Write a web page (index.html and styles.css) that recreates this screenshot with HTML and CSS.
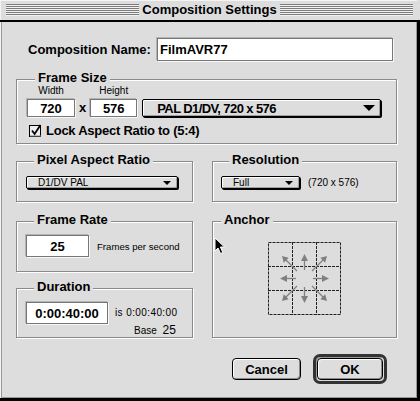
FILE: index.html
```html
<!DOCTYPE html>
<html>
<head>
<meta charset="utf-8">
<link rel="stylesheet" href="styles.css">
</head>
<body>
<div class="window">
  <div class="titlebar">
    <span class="stripes"></span>
    <span class="title">Composition Settings</span>
    <span class="stripes"></span>
  </div>
  <div class="content">
    <div class="name-row">
      <span class="name-label">Composition Name:</span>
      <div class="field name-field">FilmAVR77</div>
    </div>

    <div class="group frame-size">
      <div class="group-title">Frame Size</div>
      <div class="fs-row">
        <div class="col">
          <span class="small-label">Width</span>
          <div class="field fs-w">720</div>
        </div>
        <span class="times">x</span>
        <div class="col">
          <span class="small-label">Height</span>
          <div class="field fs-h">576</div>
        </div>
        <div class="popup big-popup">
          <span>PAL D1/DV, 720 x 576</span>
          <svg class="tri-big" width="12" height="6" viewBox="0 0 12 6"><polygon points="0,0 12,0 6,6" fill="#000"/></svg>
        </div>
      </div>
      <div class="check-row">
        <svg class="checkbox" width="14" height="13" viewBox="0 0 14 13">
          <rect x="0.5" y="1.5" width="11" height="11" fill="#eeeeee" stroke="#000"/>
          <line x1="1" y1="12" x2="12" y2="12" stroke="#888"/>
          <path d="M3 6.5 L5.6 10 L11.5 1" fill="none" stroke="#000" stroke-width="1.8"/>
        </svg>
        <span class="check-label">Lock Aspect Ratio to (5:4)</span>
      </div>
    </div>

    <div class="cols">
      <div class="col-left">
        <div class="group par">
          <div class="group-title">Pixel Aspect Ratio</div>
          <div class="popup small-popup par-popup">
            <span>D1/DV PAL</span>
            <svg width="8" height="4" viewBox="0 0 8 4"><polygon points="0,0 8,0 4,4" fill="#000"/></svg>
          </div>
        </div>
        <div class="group framerate">
          <div class="group-title">Frame Rate</div>
          <div class="fr-row">
            <div class="field fr-field">25</div>
            <span class="small-text fr-text">Frames per second</span>
          </div>
        </div>
        <div class="group duration">
          <div class="group-title">Duration</div>
          <div class="dur-row">
            <div class="field dur-field">0:00:40:00</div>
            <div class="dur-info">
              <div class="small-text dur-line1">is 0:00:40:00</div>
              <div class="small-text dur-line2">Base <span class="base-num">25</span></div>
            </div>
          </div>
        </div>
      </div>
      <div class="col-right">
        <div class="group resolution">
          <div class="group-title">Resolution</div>
          <div class="res-row">
            <div class="popup small-popup res-popup">
              <span>Full</span>
              <svg width="8" height="4" viewBox="0 0 8 4"><polygon points="0,0 8,0 4,4" fill="#000"/></svg>
            </div>
            <span class="small-text res-text">(720 x 576)</span>
          </div>
        </div>
        <div class="group anchor">
          <div class="group-title">Anchor</div>
          <svg class="anchor-grid" width="73" height="73" viewBox="0 0 73 73">
            <g stroke="#222" stroke-width="1" stroke-dasharray="3 1" fill="none">
              <rect x="0.5" y="0.5" width="72" height="72"/>
              <line x1="24.5" y1="0" x2="24.5" y2="73"/>
              <line x1="48.5" y1="0" x2="48.5" y2="73"/>
              <line x1="0" y1="24.5" x2="73" y2="24.5"/>
              <line x1="0" y1="48.5" x2="73" y2="48.5"/>
            </g>
            <g stroke="#808080" stroke-width="1.3" fill="none">
              <line x1="36.5" y1="28" x2="36.5" y2="17"/>
              <line x1="36.5" y1="45" x2="36.5" y2="56"/>
              <line x1="28" y1="36.5" x2="17" y2="36.5"/>
              <line x1="45" y1="36.5" x2="56" y2="36.5"/>
              <line x1="29" y1="29" x2="17" y2="17"/>
              <line x1="44" y1="29" x2="56" y2="17"/>
              <line x1="29" y1="44" x2="17" y2="56"/>
              <line x1="44" y1="44" x2="56" y2="56"/>
            </g>
            <g fill="#808080">
              <polygon points="36.5,12 33,19 40,19"/>
              <polygon points="36.5,61 33,54 40,54"/>
              <polygon points="12,36.5 19,33 19,40"/>
              <polygon points="61,36.5 54,33 54,40"/>
              <polygon points="14,14 20.7,15.8 15.8,20.7"/>
              <polygon points="59,14 57.2,20.7 52.3,15.8"/>
              <polygon points="14,59 15.8,52.3 20.7,57.2"/>
              <polygon points="59,59 57.2,52.3 52.3,57.2"/>
            </g>
          </svg>
        </div>
      </div>
    </div>

    <div class="buttons">
      <div class="button cancel">Cancel</div>
      <div class="ok-ring"><div class="button ok">OK</div></div>
    </div>
  </div>
  <svg class="cursor" width="12" height="18" viewBox="0 0 12 18">
    <path d="M1 1 L1 14 L4 11 L6.5 16.5 L8.8 15.5 L6.4 10 L10.5 10 Z" fill="#000" stroke="#fff" stroke-width="1" stroke-linejoin="miter"/>
  </svg>
</div>
</body>
</html>
```
FILE: styles.css
```css
* { box-sizing: border-box; }

body {
  margin: 0;
  background: #dddddd;
  font-family: "Liberation Sans", Arial, sans-serif;
  color: #000;
}

.window {
  width: 420px;
  height: 401px;
  position: relative;
}

.titlebar {
  width: 417px;
  height: 20px;
  display: flex;
  align-items: center;
  padding: 0 4px 0 6px;
  background: #dddddd;
  box-shadow: inset 1px 1px 0 #f4f4f4;
}

.stripes {
  flex: 1;
  height: 12px;
  background: repeating-linear-gradient(to bottom, #7b7b7b 0 1px, #f2f2f2 1px 2px);
}

.title {
  font-weight: bold;
  font-size: 13px;
  line-height: 20px;
  padding: 0 3px;
  white-space: nowrap;
}

.content {
  width: 420px;
  height: 381px;
  border-top: 2px solid #000;
  border-right: 3px solid #000;
  border-bottom: 3px solid #000;
  padding: 16px 0 0 16px;
  background: #dddddd;
  box-shadow: inset 1px 0 0 #f2f2f2, inset 2px 0 0 #999999, inset -1px -1px 0 #999999;
}

.name-row {
  display: flex;
  align-items: center;
  height: 23px;
  padding-left: 12px;
}

.name-label {
  width: 129px;
  font-weight: bold;
  font-size: 13px;
  line-height: 15px;
  white-space: nowrap;
}

.field {
  background: #fff;
  border: 1px solid #767676;
  box-shadow: -1px -1px 0 #b4b4b4, 1px 1px 0 #f8f8f8;
  font-weight: bold;
  font-size: 13px;
  display: flex;
  align-items: center;
  justify-content: center;
  white-space: nowrap;
}

.name-field {
  width: 236px;
  height: 23px;
  justify-content: flex-start;
  padding-left: 2px;
}

.group {
  border: 1px solid #8a8a8a;
  box-shadow: 1px 1px 0 #fff, inset 1px 1px 0 #fff;
}

.group-title {
  width: fit-content;
  margin: -10px 0 0 8px;
  height: 15px;
  line-height: 15px;
  padding: 0 3px;
  background: #dddddd;
  font-weight: bold;
  font-size: 13px;
  white-space: nowrap;
}

.frame-size {
  margin-top: 18px;
  width: 381px;
  height: 65px;
  padding-left: 10px;
}

.fs-row {
  display: flex;
  align-items: flex-end;
}

.col {
  display: flex;
  flex-direction: column;
  align-items: center;
}

.small-label {
  font-size: 10px;
  line-height: 12px;
  margin-bottom: 2px;
}

.fs-w { width: 48px; height: 18px; }
.fs-h { width: 47px; height: 18px; }

.times {
  font-weight: bold;
  font-size: 13px;
  line-height: 18px;
  margin: 0 4px;
}

.popup {
  display: flex;
  align-items: center;
  justify-content: space-between;
  background: #dddddd;
  border: 1px solid #000;
  border-radius: 2px;
  box-shadow: 1px 1px 0 #000, inset 1px 1px 0 #fff, inset -1px -1px 0 #a0a0a0;
  white-space: nowrap;
}

.big-popup {
  margin-left: 5px;
  width: 239px;
  height: 18px;
  padding: 0 5px 0 14px;
  font-weight: bold;
  font-size: 13px;
  letter-spacing: -0.6px;
}

.check-row {
  display: flex;
  align-items: center;
  height: 15px;
  margin-top: 6px;
  padding-left: 2px;
}

.checkbox { margin-right: 3px; }

.check-label {
  font-weight: bold;
  font-size: 13px;
  letter-spacing: -0.25px;
  white-space: nowrap;
}

.cols {
  margin-top: 17px;
  display: grid;
  grid-template-columns: 177px 185px;
  column-gap: 19px;
}

.col-left, .col-right {
  display: flex;
  flex-direction: column;
}

.par { height: 41px; padding-left: 9px; }
.resolution { height: 41px; padding-left: 8px; }
.framerate { height: 51px; margin-top: 19px; padding-left: 9px; }
.duration { height: 50px; margin-top: 16px; padding-left: 9px; }
.anchor { height: 117px; margin-top: 19px; }

.small-popup {
  height: 13px;
  font-size: 10px;
  line-height: 11px;
  padding: 0 6px 0 11px;
}

.par-popup { width: 152px; margin-top: 9px; }

.res-row {
  display: flex;
  align-items: center;
  margin-top: 9px;
}

.res-popup { width: 79px; padding-left: 11px; }

.small-text {
  font-size: 10px;
  white-space: nowrap;
}

.res-text { margin-left: 8px; line-height: 13px; }

.fr-row {
  display: flex;
  align-items: center;
  margin-top: 8px;
}

.fr-field { width: 63px; height: 22px; }
.fr-text { margin-left: 8px; font-size: 9.6px; }

.dur-row {
  display: flex;
  align-items: flex-start;
  margin-top: 8px;
}

.dur-field { width: 82px; height: 22px; }

.dur-info { margin-left: 7px; }

.dur-line1 { line-height: 22px; letter-spacing: 0.4px; }

.dur-line2 {
  line-height: 12px;
  padding-left: 19px;
}

.base-num {
  font-size: 12px;
  margin-left: 3px;
}

.anchor-grid {
  display: block;
  margin: 15px auto 0;
}

.buttons {
  margin-top: 16px;
  display: flex;
  justify-content: flex-end;
  align-items: center;
  padding-right: 30px;
}

.button {
  height: 22px;
  border: 1px solid #000;
  border-radius: 4px;
  background: #dddddd;
  box-shadow: inset 1px 1px 0 #fff, inset -1px -1px 0 #8a8a8a;
  font-weight: bold;
  font-size: 13px;
  display: flex;
  align-items: center;
  justify-content: center;
}

.cancel { width: 69px; margin-right: 12px; }

.ok-ring {
  border: 3px solid #333;
  border-radius: 7px;
  padding: 1px;
  box-shadow: inset 1px 1px 0 #999;
}

.ok { width: 66px; }

.cursor {
  position: absolute;
  left: 214px;
  top: 237px;
}
```
